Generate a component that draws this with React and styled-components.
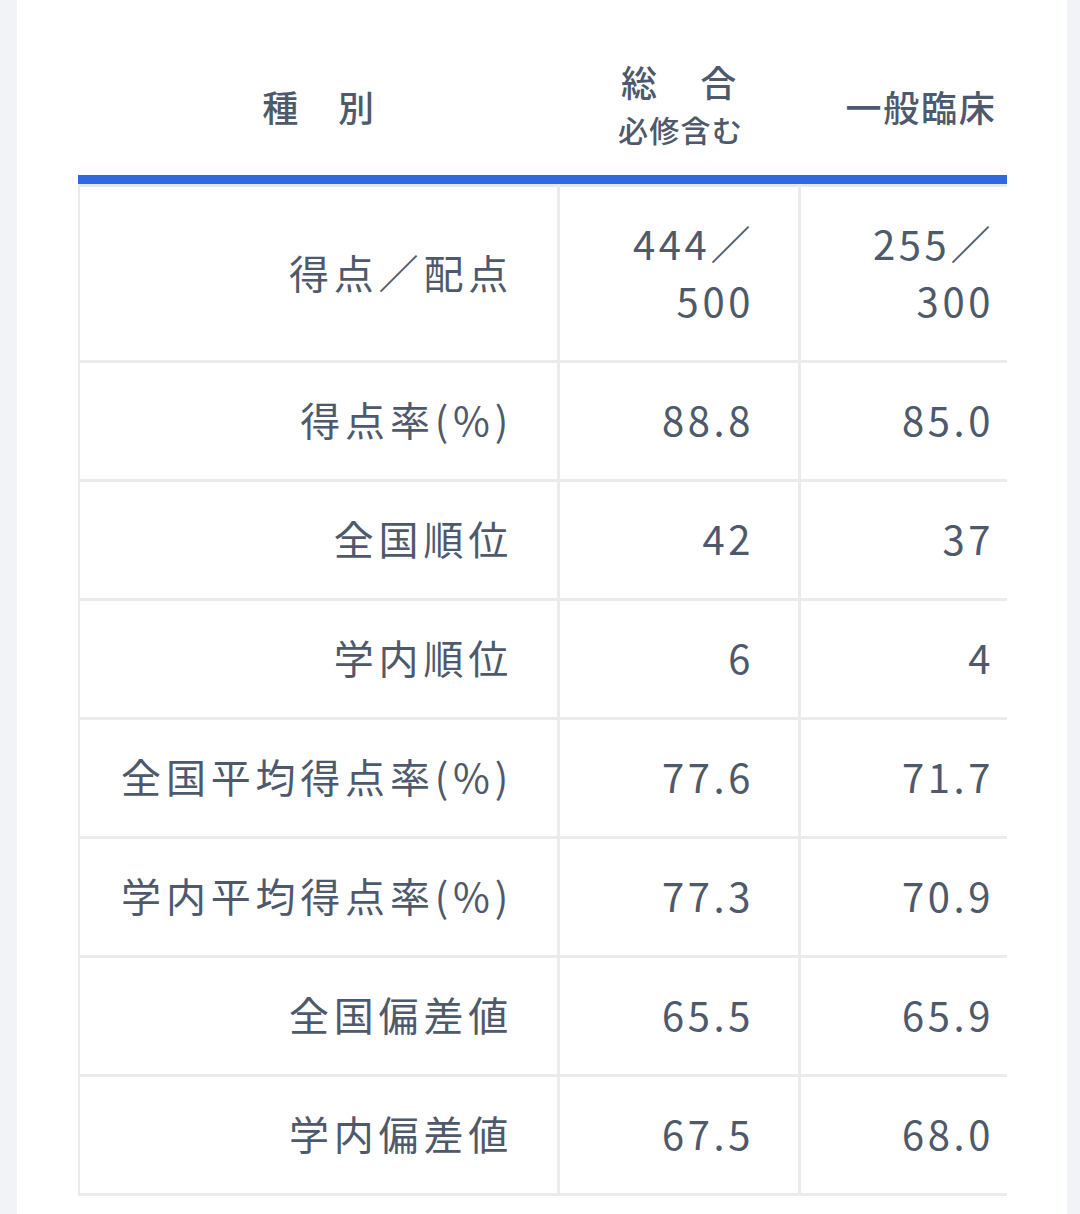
import React from 'react';
import styled, { createGlobalStyle } from 'styled-components';

const GlobalStyle = createGlobalStyle`
  html, body {
    margin: 0;
    padding: 0;
    background: #f1f3f6;
  }
  body {
    font-family: "Noto Sans CJK JP", "Noto Sans", sans-serif;
    color: #4e596b;
  }
`;

const Page = styled.div`
  min-height: 1214px;
  padding-left: 17px;
`;

const Card = styled.section`
  width: 1050px;
  min-height: 1214px;
  background: #ffffff;
  padding-left: 61px;
  box-sizing: border-box;
`;

const Scroller = styled.div`
  width: 929px;
  overflow: hidden;
`;

const Table = styled.table`
  width: 963px;
  table-layout: fixed;
  border-collapse: separate;
  border-spacing: 0;
`;

const HeadCell = styled.th`
  height: 139px;
  padding: 36px 0 0;
  border-bottom: 9px solid #3068e1;
  font-size: 36px;
  font-weight: 500;
  letter-spacing: ${p => p.$spacing || '0.05em'};
  line-height: 46px;
  text-align: center;
  vertical-align: middle;
  white-space: nowrap;
`;

const SubLabel = styled.div`
  font-size: 30px;
  line-height: 50px;
  letter-spacing: 0.04em;
`;

const Cell = styled.td`
  padding: 28px 44px 31px 0;
  font-size: 40px;
  font-weight: 400;
  line-height: 57px;
  letter-spacing: ${p => (p.$label ? '0.12em' : '0.09em')};
  text-align: right;
  vertical-align: middle;
  border-right: 3px solid #ebebed;
  border-bottom: 3px solid #ebebed;
  border-top: ${p => (p.$first ? '3px solid #e4e9f0' : 'none')};
  border-left: ${p => (p.$label ? '2px solid #ebebed' : 'none')};
  white-space: nowrap;
`;

const rows = [
  { label: '得点率(%)', total: '88.8', general: '85.0' },
  { label: '全国順位', total: '42', general: '37' },
  { label: '学内順位', total: '6', general: '4' },
  { label: '全国平均得点率(%)', total: '77.6', general: '71.7' },
  { label: '学内平均得点率(%)', total: '77.3', general: '70.9' },
  { label: '全国偏差値', total: '65.5', general: '65.9' },
  { label: '学内偏差値', total: '67.5', general: '68.0' },
];

const App = () => (
  <Page>
    <GlobalStyle />
    <Card>
      <Scroller>
        <Table>
          <colgroup>
            <col style={{ width: 482 }} />
            <col style={{ width: 241 }} />
            <col style={{ width: 240 }} />
          </colgroup>
          <thead>
            <tr>
              <HeadCell>種　別</HeadCell>
              <HeadCell $spacing="0.1em">
                総　合
                <SubLabel>必修含む</SubLabel>
              </HeadCell>
              <HeadCell>一般臨床</HeadCell>
            </tr>
          </thead>
          <tbody>
            <tr>
              <Cell $label $first>得点／配点</Cell>
              <Cell $first>
                444／
                <br />
                500
              </Cell>
              <Cell $first>
                255／
                <br />
                300
              </Cell>
            </tr>
            {rows.map(row => (
              <tr key={row.label}>
                <Cell $label>{row.label}</Cell>
                <Cell>{row.total}</Cell>
                <Cell>{row.general}</Cell>
              </tr>
            ))}
          </tbody>
        </Table>
      </Scroller>
    </Card>
  </Page>
);

export default App;
